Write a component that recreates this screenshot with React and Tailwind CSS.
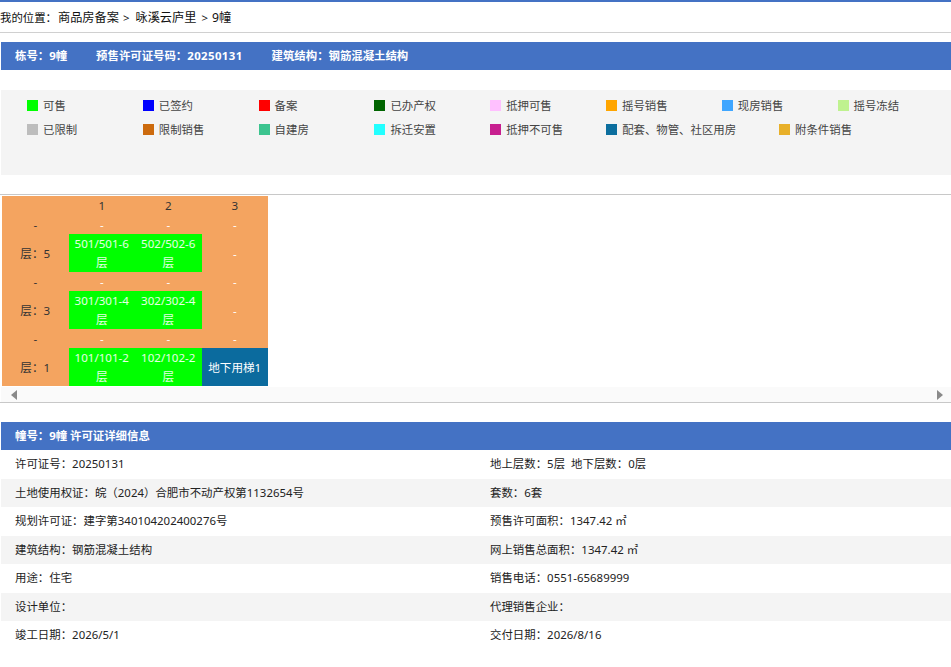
import React from "react";

const legend = [
  ["可售", "bg-[#00ff00]"],
  ["已签约", "bg-[#0000ff]"],
  ["备案", "bg-[#ff0000]"],
  ["已办产权", "bg-[#006400]"],
  ["抵押可售", "bg-[#ffc0ff]"],
  ["摇号销售", "bg-[#ffa500]"],
  ["现房销售", "bg-[#3fa6ff]"],
  ["摇号冻结", "bg-[#bff28f]"],
  ["已限制", "bg-[#bdbdbd]"],
  ["限制销售", "bg-[#cc6a0d]"],
  ["自建房", "bg-[#3cc48f]"],
  ["拆迁安置", "bg-[#22ffff]"],
  ["抵押不可售", "bg-[#c71f8f]"],
  ["配套、物管、社区用房", "bg-[#0c6e9e]"],
  ["附条件销售", "bg-[#e8b02a]"],
];

const floors = [
  { label: "层：5", rooms: ["501/501-6层", "502/502-6层"] },
  { label: "层：3", rooms: ["301/301-4层", "302/302-4层"] },
  { label: "层：1", rooms: ["101/101-2层", "102/102-2层"], extra: "地下用梯1" },
];

const details = [
  ["许可证号：20250131", "地上层数：5层  地下层数：0层"],
  ["土地使用权证：皖（2024）合肥市不动产权第1132654号", "套数：6套"],
  ["规划许可证：建字第340104202400276号", "预售许可面积：1347.42 ㎡"],
  ["建筑结构：钢筋混凝土结构", "网上销售总面积：1347.42 ㎡"],
  ["用途：住宅", "销售电话：0551-65689999"],
  ["设计单位：", "代理销售企业："],
  ["竣工日期：2026/5/1", "交付日期：2026/8/16"],
];

const DashRow = () => (
  <>
    <div className="h-[19px] text-[#333]">-</div>
    <div className="h-[19px] text-white">-</div>
    <div className="h-[19px] text-white">-</div>
    <div className="h-[19px] text-white">-</div>
  </>
);

const App = () => {
  return (
    <div className="min-h-[667px] bg-white font-['Noto_Sans','Noto_Sans_CJK_SC',sans-serif] text-[11.4px] leading-[19px] text-[#222] border-t-2 border-[#4472c4] overflow-hidden">
      {/* breadcrumb */}
      <div className="h-[31px] border-b border-[#d0d0d0] text-[12.2px] leading-[31px] text-[#111] flex whitespace-nowrap">
        <span className="w-[58px] text-[11.4px]">我的位置：</span>
        <span>商品房备案</span>
        <span className="ml-[4px] mr-[6px] text-[11.4px]">{">"}</span>
        <span>咏溪云庐里</span>
        <span className="ml-[5px] mr-[4px] text-[11.4px]">{">"}</span>
        <span>9幢</span>
      </div>

      <div className="mt-[9px] ml-px h-[28px] bg-[#4472c4] pl-[14px] pb-[2px] flex gap-[29px] items-center font-bold text-white">
        <span>栋号：9幢</span>
        <span>预售许可证号码：<span className="tracking-[0.4px]">20250131</span></span>
        <span>建筑结构：钢筋混凝土结构</span>
      </div>

      {/* legend */}
      <div className="mt-[20px] ml-px h-[85px] bg-[#f4f4f4] pl-[26px] pt-[4px] overflow-hidden text-[#444]">
        <div className="w-[960px] flex flex-wrap content-start">
          {legend.map(([name, color]) => (
            <div key={name} className="h-[23.5px] min-w-[115.8px] pr-[43px] flex items-center gap-[5px]">
              <span className={`w-[11px] h-[11px] shrink-0 ${color}`}></span>
              <span className="whitespace-nowrap">{name}</span>
            </div>
          ))}
        </div>
      </div>

      {/* building table */}
      <div className="mt-[19px] border-t border-b border-[#c8c8c8] h-[209px] pt-px">
        <div className="ml-[2px] w-[266px] bg-[#f4a460] grid grid-cols-4 text-center text-[11.6px]">
          <div className="h-[19px]"></div>
          <div className="h-[19px] text-[#333]">1</div>
          <div className="h-[19px] text-[#333]">2</div>
          <div className="h-[19px] text-[#333]">3</div>
          {floors.map((f) => (
            <React.Fragment key={f.label}>
              <DashRow />
              <div className="h-[38px] flex items-center justify-center text-[#333]">{f.label}</div>
              {f.rooms.map((r) => (
                <div key={r} className="h-[38px] bg-[#00ff00] text-white/90 px-[3px]">{r}</div>
              ))}
              {f.extra ? (
                <div className="h-[38px] bg-[#0b6b9e] text-white flex items-center justify-center">{f.extra}</div>
              ) : (
                <div className="h-[38px] flex items-center justify-center text-white">-</div>
              )}
            </React.Fragment>
          ))}
        </div>
        <div className="ml-px mt-px h-[15px] bg-[#fafafa] flex items-center justify-between pl-[10px] pr-[8px]">
          <svg width="6" height="10" viewBox="0 0 6 10"><polygon points="6,0 6,10 0,5" fill="#8a8a8a" /></svg>
          <svg width="6" height="10" viewBox="0 0 6 10"><polygon points="0,0 0,10 6,5" fill="#8a8a8a" /></svg>
        </div>
      </div>

      {/* permit details */}
      <div className="mt-[19px] ml-px h-[28px] bg-[#4472c4] pl-[14px] pb-[2px] flex items-center font-bold text-white">
        幢号：9幢 许可证详细信息
      </div>
      {details.map(([left, right], i) => (
        <div
          key={left}
          className={`ml-px pb-[2px] grid grid-cols-[475px_1fr] items-center whitespace-pre tracking-[0.03px] ${i % 2 ? "h-[28px] bg-[#f4f4f4]" : "h-[29px] bg-white"}`}
        >
          <div className="pl-[14px]">{left}</div>
          <div className="pl-[14px]">{right}</div>
        </div>
      ))}
    </div>
  );
};

export default App;
